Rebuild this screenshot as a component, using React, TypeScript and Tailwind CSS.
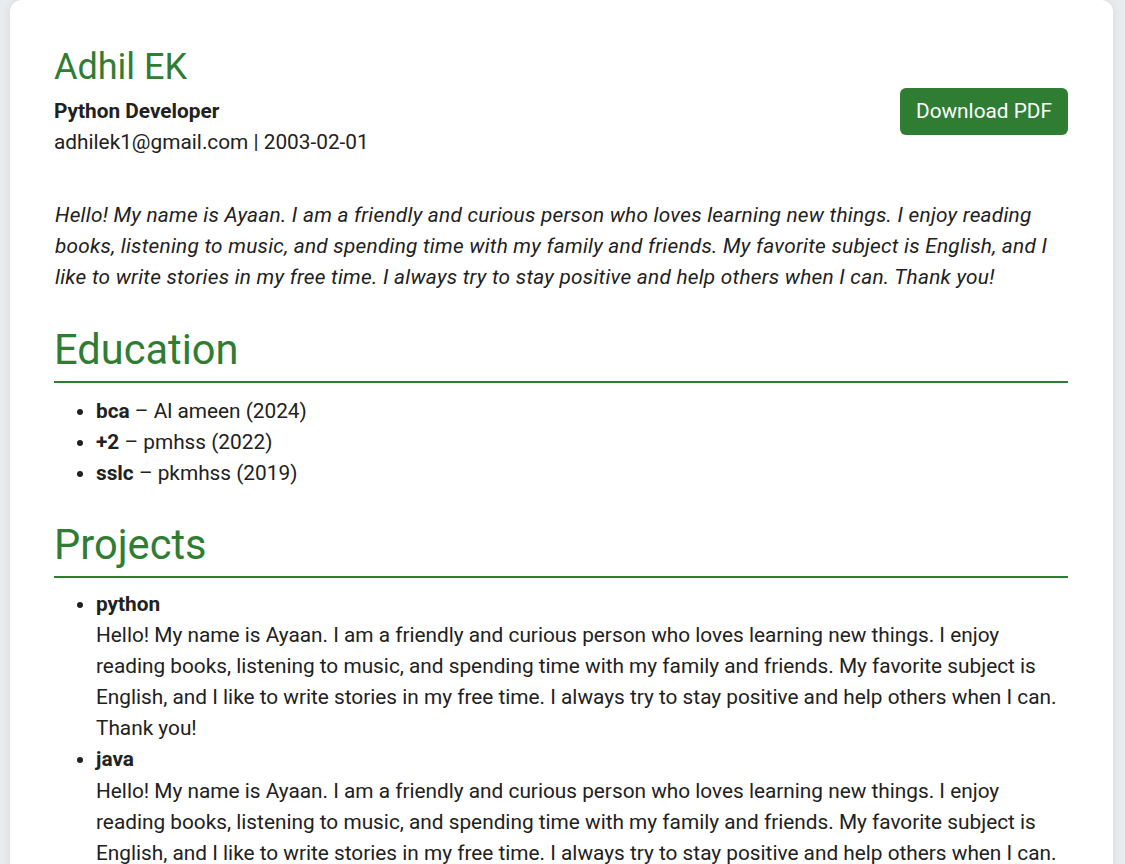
const education = [
  { degree: "bca", school: "Al ameen", year: "2024" },
  { degree: "+2", school: "pmhss", year: "2022" },
  { degree: "sslc", school: "pkmhss", year: "2019" },
];

const blurb =
  "Hello! My name is Ayaan. I am a friendly and curious person who loves learning new things. I enjoy reading books, listening to music, and spending time with my family and friends. My favorite subject is English, and I like to write stories in my free time. I always try to stay positive and help others when I can. Thank you!";

const projects = [
  { name: "python", text: blurb },
  { name: "java", text: blurb },
];

export default function App() {
  return (
    <div
      className="min-h-screen bg-[#e9ecef] pl-[10px] pr-[12px] text-[#212121]"
      style={{ fontFamily: "Roboto, 'Liberation Sans', sans-serif" }}
    >
      <div className="rounded-[12px] bg-white pl-[44px] pr-[45px] pt-[46px] pb-10 shadow-[0_0_10px_rgba(0,0,0,0.08)] text-[20.8px] leading-[1.5]">
        {/* Header */}
        <div className="flex items-start justify-between">
          <div>
            <h1 className="text-[36px] leading-[1.2] font-normal text-[#2e7d32] mb-[7px]">Adhil EK</h1>
            <div className="font-bold">Python Developer</div>
            <div>adhilek1@gmail.com | 2003-02-01</div>
          </div>
          <button className="mt-[42px] rounded-[6px] bg-[#2e7d32] px-4 py-[8px] text-[20.8px] leading-[1.5] text-white">
            Download PDF
          </button>
        </div>

        {/* Summary */}
        <p className="mt-[41px] italic tracking-[0.25px] pl-[1px]">{blurb}</p>

        {/* Education */}
        <h2 className="mt-[32px] border-b-2 border-[#2e7d32] pb-[6px] text-[41.6px] leading-[1.2] font-normal text-[#2e7d32]">
          Education
        </h2>
        <ul className="mt-[13px] list-disc pl-[42px]">
          {education.map((e) => (
            <li key={e.degree}>
              <b>{e.degree}</b> – {e.school} ({e.year})
            </li>
          ))}
        </ul>

        {/* Projects */}
        <h2 className="mt-[30px] border-b-2 border-[#2e7d32] pb-[6px] text-[41.6px] leading-[1.2] font-normal text-[#2e7d32]">
          Projects
        </h2>
        <ul className="mt-[11px] list-disc pl-[42px]">
          {projects.map((p) => (
            <li key={p.name}>
              <b>{p.name}</b>
              <br />
              {p.text}
            </li>
          ))}
        </ul>
      </div>
    </div>
  );
}
